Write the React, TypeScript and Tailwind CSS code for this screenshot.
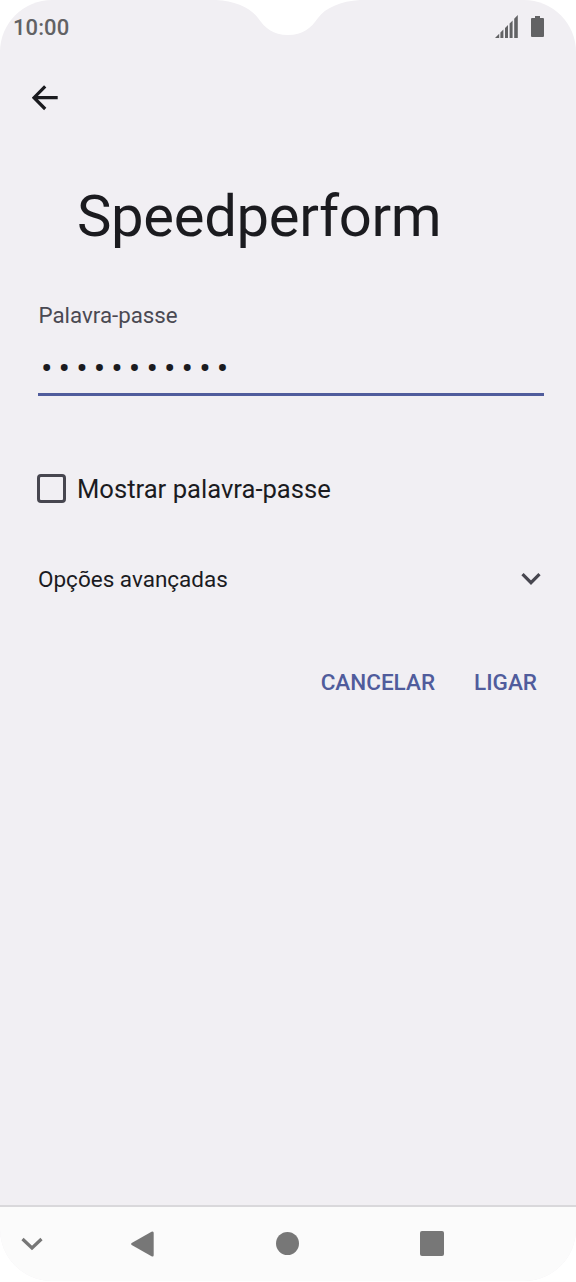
import React from 'react';

const StatusBar: React.FC = () => (
  <div className="relative h-14 shrink-0 flex items-start justify-between pl-[13px] pr-[31px] text-[#626264]">
    {/* camera notch */}
    <svg className="absolute top-0 left-[216px] w-36 h-9" viewBox="0 0 144 36" fill="white">
      <path d="M0 0C19 1 35 8 42 18C49 28 57 35 72 35C87 35 95 28 102 18C109 8 125 1 144 0Z" />
    </svg>
    <span className="mt-[14px] text-[22px] leading-[28px] tracking-[0.1px] font-medium">10:00</span>
    <div className="flex items-start gap-3 mt-[15px]">
      <svg className="w-6 h-6" viewBox="0 0 24 24" fill="currentColor">
        <path d="M0 23L4.2 18.8V23ZM5.4 17.6L8.4 14.6V23H5.4ZM10 13L13 10V23H10ZM14.6 8.6L17.6 5.4V23H14.6ZM19.2 3.8L22.8 0V23H19.2Z" />
      </svg>
      <svg className="w-[14px] h-6" viewBox="0 0 14 24" fill="currentColor">
        <path d="M4 1H9V3H12Q13 3 13 4V21Q13 22 12 22H1Q0 22 0 21V4Q0 3 1 3H4Z" />
      </svg>
    </div>
  </div>
);

const NavigationBar: React.FC = () => (
  <nav className="h-[76px] shrink-0 border-t-2 border-[#d9d8db] bg-[#fbfbfb] flex items-center pb-px text-[#777777]">
    <div className="w-[71px] flex pl-[21px]">
      <svg className="w-[22px] h-[14px]" viewBox="0 0 22 14" fill="none" stroke="currentColor" strokeWidth="3.2">
        <path d="M1.5 2L11 11L20.5 2" />
      </svg>
    </div>
    <div className="w-36 flex justify-center">
      <svg className="w-6 h-[26px]" viewBox="0 0 24 26" fill="currentColor">
        <path d="M.7 12Q-.5 13 .7 14L20.5 25.3Q22.7 26.3 22.7 24V2Q22.7-.3 20.5.7Z" />
      </svg>
    </div>
    <div className="w-[145px] flex justify-center">
      <span className="w-[23px] h-[23px] rounded-full bg-[#777777]" />
    </div>
    <div className="w-36 flex justify-center">
      <span className="w-6 h-[25px] rounded-[2px] bg-[#777777]" />
    </div>
  </nav>
);

export default function App() {
  return (
    <div className="w-[576px] h-[1282px] bg-white font-['Roboto',sans-serif] text-[#1b1b1f]">
      <div className="h-[1281px] rounded-[52px] overflow-hidden bg-[#f1eff3] flex flex-col">
        <StatusBar />

        <main className="flex-1 flex flex-col">
          <button className="ml-8 mt-[29px] w-[26px] h-[26px]" aria-label="Voltar">
            <svg className="w-[26px] h-[26px]" viewBox="0 0 26 26" fill="none" stroke="currentColor" strokeWidth="3.2">
              <path d="M25.7 12.7H2M13.2 1.4L2 12.7L13.2 24" />
            </svg>
          </button>

          <h1 className="ml-[77px] mt-[70px] text-[58px] leading-[70px] tracking-[-0.34px] whitespace-nowrap">Speedperform</h1>

          <div className="ml-[38px] mr-8 mt-[51px] border-b-[3px] border-[#505c9c] h-[94px]">
            <label className="block pl-[0.5px] text-[22.3px] leading-[26px] text-[#4a4952]">Palavra-passe</label>
            <div className="pl-[3px] mt-[27px] text-[34px] leading-[26px] tracking-[6.1px] whitespace-nowrap">•••••••••••</div>
          </div>

          <label className="ml-[37px] mt-[77px] flex items-center gap-[11px] h-[30px]">
            <span className="w-[29px] h-[29px] border-[3px] border-[#47464f] rounded-[4px]" />
            <span className="mt-px text-[25.6px] leading-[30px] whitespace-nowrap">Mostrar palavra-passe</span>
          </label>

          <div className="ml-[38px] mr-[35px] mt-[62px] flex items-center justify-between h-[28px]">
            <span className="-mt-px text-[22.5px] leading-[28px] whitespace-nowrap">Opções avançadas</span>
            <svg className="w-5 h-3" viewBox="0 0 20 12" fill="none" stroke="#47464f" strokeWidth="3.2">
              <path d="M1.5 1.2L10 9.7L18.5 1.2" />
            </svg>
          </div>

          <div className="mr-[39px] mt-[74px] flex justify-end gap-[39px] text-[22.5px] leading-[30px] font-medium text-[#505c9c]">
            <button>CANCELAR</button>
            <button>LIGAR</button>
          </div>
        </main>

        <NavigationBar />
      </div>
    </div>
  );
}
